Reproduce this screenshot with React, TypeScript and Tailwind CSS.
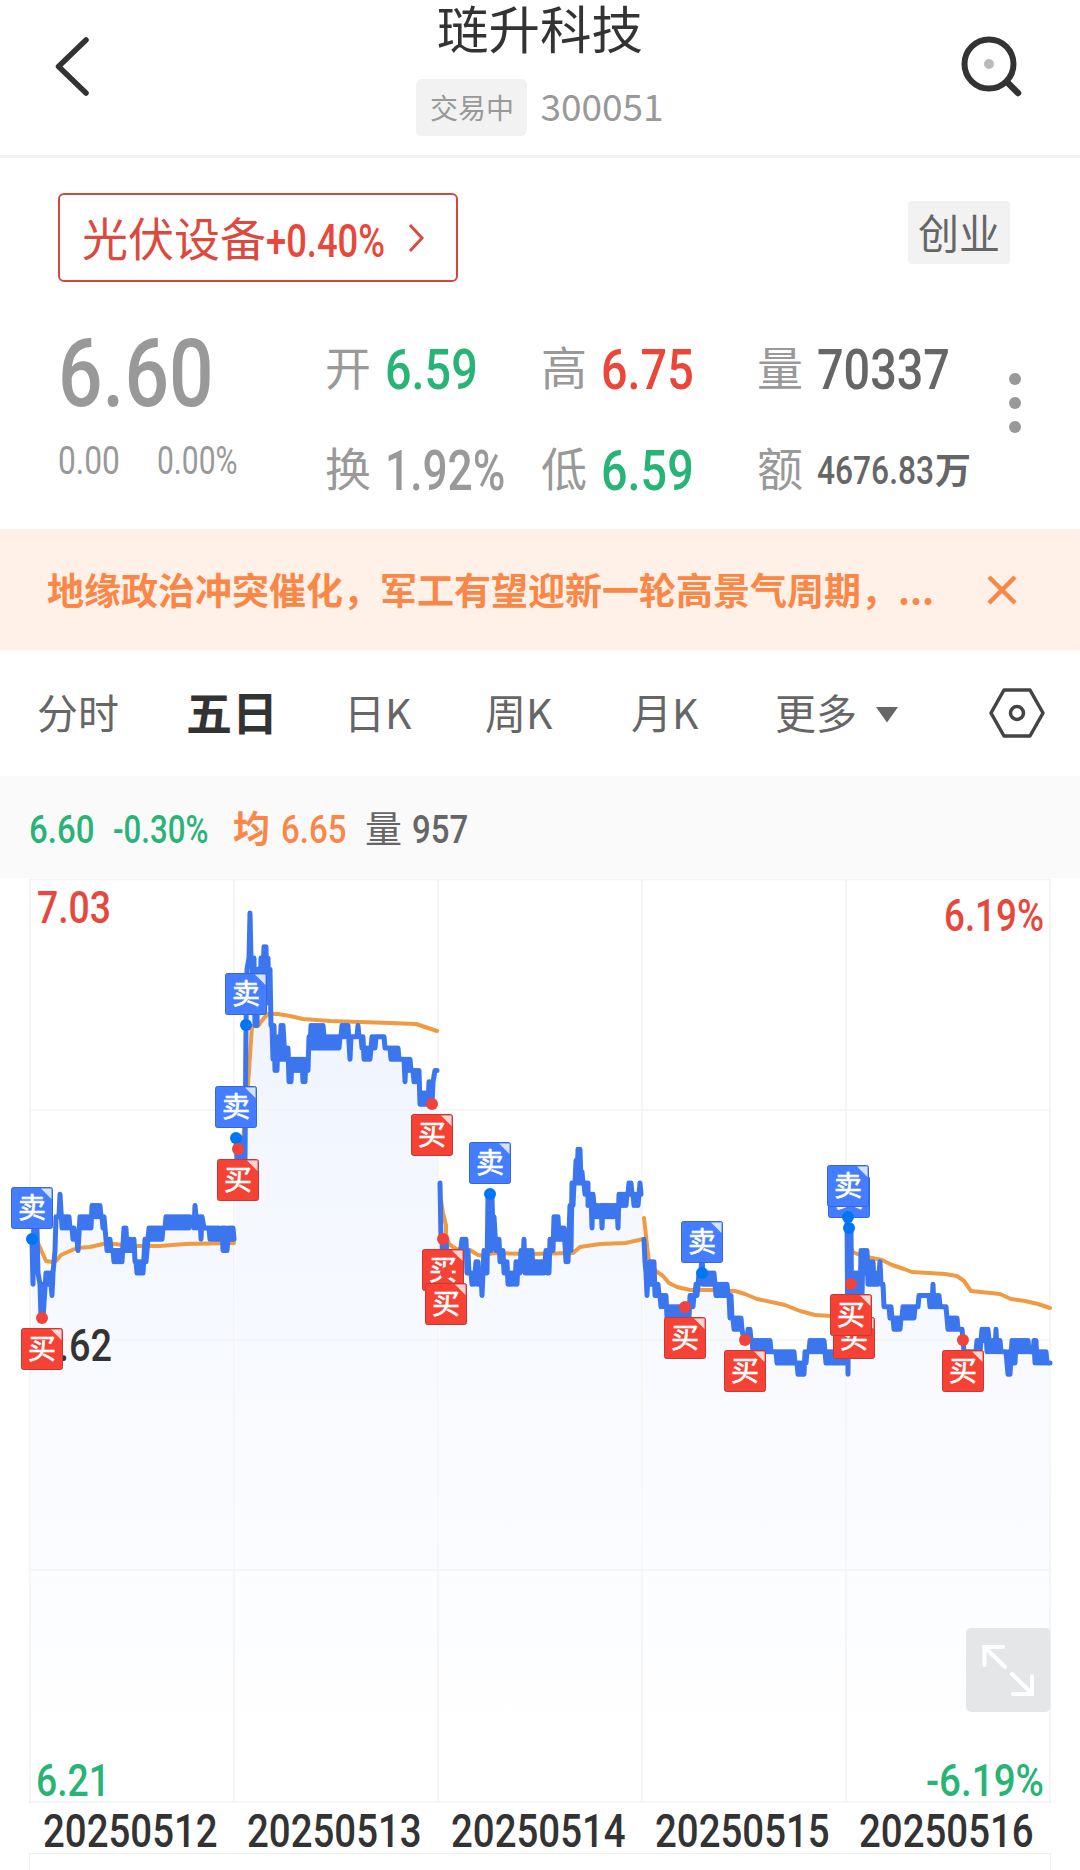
import { clsx } from "clsx"

// Chart geometry: one tick is 0.01 yuan, tick 0 is the previous close (6.62)
const BASE_Y = 1340.5
const TICK = 11.25
const CHART_TOP = 878

type Band = [number, number, number, number] // x from, x to, low tick, high tick
type Marker = { kind: "buy" | "sell"; x: number; y: number }

const days: Band[][] = [
    [
        [32, 33, 5, 9], [34, 35, 9, 12], [37, 38, 6, 10], [40, 43, 2, 5], [46, 50, 5, 6], [52, 53, 4, 6], [55, 56, 8, 11], [59, 60, 11, 13],
        [62, 70, 10, 11], [72, 75, 9, 10], [77, 78, 8, 9], [80, 91, 10, 11], [92, 101, 11, 12], [102, 105, 10, 11], [106, 111, 8, 9],
        [113, 122, 7, 8], [124, 127, 8, 10], [129, 132, 8, 9], [134, 135, 7, 9], [136, 143, 6, 7], [145, 146, 7, 9], [149, 163, 9, 10],
        [165, 190, 10, 11], [194, 195, 10, 12], [197, 199, 10, 11], [200, 202, 9, 11], [204, 209, 10, 10], [210, 220, 9, 10], [222, 227, 8, 10], [229, 234, 9, 10],
    ],
    [
        [236, 244, 16, 18], [245, 246, 16, 28], [246, 247, 28, 33], [249, 251, 34, 38], [252, 254, 30, 34], [255, 258, 28, 33],
        [260, 262, 30, 34], [264, 266, 31, 35], [267, 269, 30, 34], [270, 271, 28, 33], [272, 274, 25, 28], [275, 278, 24, 27], [280, 283, 25, 28],
        [285, 288, 25, 26], [289, 291, 23, 25], [292, 302, 24, 25], [303, 306, 23, 25], [308, 309, 24, 27], [310, 323, 26, 28], [325, 340, 26, 27],
        [341, 348, 27, 28], [350, 351, 25, 27], [352, 355, 27, 27], [357, 359, 27, 28], [361, 363, 26, 27], [364, 371, 25, 26], [371, 376, 26, 27],
        [377, 384, 27, 27], [385, 389, 26, 26], [390, 398, 25, 26], [399, 404, 25, 25], [405, 406, 23, 25], [407, 411, 24, 25], [413, 419, 23, 24],
        [420, 428, 21, 22], [429, 433, 21, 23], [435, 437, 24, 24],
    ],
    [
        [440, 441, 9, 14], [442, 446, 5, 9], [448, 458, 6, 7], [462, 466, 8, 9], [467, 469, 6, 8], [471, 474, 5, 6], [476, 479, 5, 7], [481, 482, 4, 6],
        [484, 487, 6, 8], [488, 492, 8, 13], [493, 494, 9, 11], [496, 499, 8, 9], [500, 503, 7, 8], [504, 507, 6, 7], [508, 513, 5, 6], [515, 518, 5, 7],
        [520, 521, 6, 8], [523, 524, 7, 9], [525, 533, 6, 8], [535, 544, 6, 7], [546, 549, 6, 8], [550, 553, 8, 9], [554, 559, 9, 11], [560, 564, 9, 10],
        [566, 568, 7, 9], [570, 571, 8, 12], [572, 574, 12, 14], [575, 577, 14, 16], [578, 580, 14, 17], [581, 583, 14, 15], [584, 588, 13, 14],
        [588, 591, 12, 13], [592, 593, 10, 13], [595, 599, 11, 12], [601, 602, 10, 12], [603, 616, 11, 12], [617, 618, 10, 12], [619, 627, 12, 13],
        [628, 632, 13, 14], [633, 638, 12, 13], [640, 641, 13, 14],
    ],
    [
        [644, 645, 7, 9], [646, 648, 4, 6], [649, 654, 5, 7], [655, 659, 4, 5], [660, 666, 3, 4], [667, 689, 2, 3], [690, 694, 3, 4], [695, 698, 4, 5],
        [698, 701, 5, 6], [701, 702, 6, 8], [703, 714, 5, 6], [716, 728, 4, 5], [729, 732, 2, 4], [733, 742, 1, 2], [744, 746, 0, 0], [747, 751, 0, 1],
        [752, 771, -1, 0], [772, 776, -1, -1], [777, 795, -2, -1], [797, 804, -3, -2], [805, 807, -2, -1], [809, 824, -1, 0], [826, 846, -2, -1],
    ],
    [
        [847, 848, -3, 11], [849, 852, -1, 10], [853, 860, 3, 6], [861, 863, 4, 8], [864, 867, 6, 8], [868, 873, 5, 7], [874, 878, 5, 6], [880, 881, 5, 7],
        [883, 884, 3, 5], [885, 888, 3, 3], [889, 892, 2, 3], [893, 901, 1, 2], [902, 914, 2, 3], [915, 918, 3, 3], [919, 928, 4, 4], [929, 931, 3, 4],
        [932, 933, 3, 5], [934, 940, 3, 4], [941, 946, 3, 3], [947, 957, 1, 2], [958, 962, 1, 1], [963, 964, -1, 0], [965, 976, -1, -1], [977, 980, -1, 0],
        [982, 985, 0, 1], [986, 988, -1, 1], [990, 993, -1, 0], [995, 996, -1, 1], [997, 1001, -1, 0], [1002, 1006, -1, -1], [1008, 1010, -3, -1],
        [1012, 1016, -2, 0], [1017, 1028, -1, 0], [1029, 1033, -1, -1], [1034, 1037, -2, 0], [1038, 1047, -2, -1], [1048, 1050, -2, -2],
    ],
]

const averages = [
    "33,1239 38,1243 42,1252 46,1261 52,1262 56,1261 61,1255 70,1251 77,1248 90,1247 103,1244 115,1244 130,1246 160,1246 185,1244 234,1243",
    "236,1150 243,1140 248,1085 252,1026 258,1026 264,1018 268,1014 278,1014 290,1016 303,1019 330,1021 360,1022 390,1023 416,1024 428,1028 437,1031",
    "441,1200 443,1213 446,1225 446,1235 449,1244 456,1249 470,1250 478,1255 485,1256 493,1253 530,1254 573,1253 580,1247 600,1244 626,1243 643,1239",
    "644,1218 647,1245 649,1262 656,1271 663,1276 669,1283 677,1287 690,1290 710,1290 735,1291 745,1294 757,1299 785,1305 800,1311 815,1315 832,1316 845,1318",
    "849,1245 853,1252 862,1256 882,1260 892,1265 904,1269 912,1272 945,1274 957,1276 964,1281 971,1291 1000,1294 1011,1299 1025,1301 1038,1304 1050,1308",
]

const markers: Marker[] = [
    { kind: "sell", x: 32, y: 1239 },
    { kind: "buy", x: 42, y: 1318 },
    { kind: "sell", x: 246, y: 1025 },
    { kind: "sell", x: 236, y: 1138 },
    { kind: "buy", x: 238, y: 1149 },
    { kind: "buy", x: 432, y: 1104 },
    { kind: "sell", x: 490, y: 1194 },
    { kind: "buy", x: 443, y: 1239 },
    { kind: "buy", x: 446, y: 1273 },
    { kind: "sell", x: 702, y: 1273 },
    { kind: "buy", x: 685, y: 1307 },
    { kind: "buy", x: 745, y: 1340 },
    { kind: "sell", x: 849, y: 1228 },
    { kind: "sell", x: 848, y: 1217 },
    { kind: "buy", x: 854, y: 1307 },
    { kind: "buy", x: 851, y: 1284 },
    { kind: "buy", x: 963, y: 1340 },
]

const dates = ["20250512", "20250513", "20250514", "20250515", "20250516"]

const tickY = (n: number) => BASE_Y - n * TICK

// Walks through every band, bouncing between its low and high price
const toPoints = (bands: Band[]) => {
    const pts: string[] = []
    let up = true
    bands.forEach(([from, to, lo, hi]) => {
        for (let x = from; x <= to; x += 1) {
            pts.push(`${x},${tickY(up ? hi : lo)}`)
            up = !up
        }
    })
    return pts.join(" ")
}

// Condensed digits; a trailing percent sign needs a slightly tighter squeeze
const Num = ({ children, className }: { children: string; className?: string }) => (
    <span
        className={clsx(
            "block origin-left whitespace-nowrap font-['Roboto',sans-serif] leading-none",
            children.endsWith("%") ? "scale-x-[0.79]" : "scale-x-[0.835]",
            className
        )}
    >
        {children}
    </span>
)

const AxisText = ({ x, y, w, fill, children }: { x: number; y: number; w: number; fill: string; children: string }) => (
    <text x={x} y={y} textLength={w} lengthAdjust="spacingAndGlyphs" fill={fill} fontSize="45" className="font-['Roboto',sans-serif] font-medium">
        {children}
    </text>
)

const TradeMarker = ({ kind, x, y }: Marker) => {
    const sell = kind === "sell"
    const top = sell ? y - 52 : y + 10
    const left = x - 21
    return (
        <g>
            <rect x={left + 0.5} y={top + 0.5} width="41" height="41" rx="2" fill={sell ? "#447dff" : "#f64235"} stroke={sell ? "#3867d6" : "#c63a33"} />
            <path d={`M${left + 30} ${top + 1.5}h10.5v10.5z`} fill="#fff" fillOpacity="0.78" />
            <text x={x} y={top + 31} textAnchor="middle" fontSize="28" fill="#fff" stroke="#fff" strokeWidth="0.6" className="font-['Noto_Sans_CJK_SC',sans-serif]">
                {sell ? "卖" : "买"}
            </text>
        </g>
    )
}

const Header = () => (
    <header className="flex h-[158px] items-start justify-between border-b-[3px] border-[#f2f2f2]">
        <svg className="ml-[50px] mt-[33px] h-[66px] w-[46px]" viewBox="0 0 46 66" fill="none" stroke="#333" strokeWidth="5.5" strokeLinecap="round" strokeLinejoin="round">
            <path d="M36 7 8.500 33.500 36 60" />
        </svg>
        <div className="ml-[26px] flex flex-col items-center">
            <h1 className="text-[51.500px] leading-[54px] text-[#333]">琏升科技</h1>
            <div className="mt-[25px] flex items-center gap-[13px]">
                <span className="flex h-[57px] w-[111px] items-center justify-center rounded-md bg-[#f2f2f2] pb-px text-[28px] leading-none text-[#999]">交易中</span>
                <span className="pb-[5px] text-[37px] leading-none text-[#999]">300051</span>
            </div>
        </div>
        <svg className="mr-[52px] mt-[32px] size-[70px]" viewBox="0 0 70 70" fill="none" stroke="#333">
            <circle cx="31" cy="32" r="24.500" strokeWidth="6" />
            <circle cx="31" cy="32" r="5" fill="#bbb" stroke="none" />
            <path d="m49 50 11 11" strokeWidth="6.500" strokeLinecap="round" />
        </svg>
    </header>
)

const Pair = ({ label, value, color }: { label: string; value: string; color: string }) => (
    <div className="flex h-[46px] items-center gap-[14px]">
        <span className="pb-1 text-[46px] leading-none text-[#999]">{label}</span>
        <Num className={clsx("w-0 pt-[6px] text-[56px] font-medium", color)}>{value}</Num>
    </div>
)

const Quote = () => (
    <section className="flex h-[371px] flex-col">
        <div className="flex items-start justify-between pl-[58px] pr-[70px] pt-[35px]">
            <div className="flex h-[89px] w-[400px] items-center rounded-md border-2 border-[#d2483f] pl-[22px] text-[#dc4a3f]">
                <span className="pb-1 text-[46px] leading-none">光伏设备</span>
                <Num className="w-[141px] pt-[6px] text-[46px] font-medium text-[#e8483c]">+0.40%</Num>
                <svg className="h-[30px] w-5" viewBox="0 0 20 30" fill="none" stroke="currentColor" strokeWidth="3">
                    <path d="M3 2 15 15 3 28" />
                </svg>
            </div>
            <span className="mt-2 flex h-[63px] w-[102px] items-center justify-center rounded bg-[#f2f2f2] pb-[2px] text-[41px] leading-none text-[#666]">创业</span>
        </div>
        <div className="mt-[45px] flex">
            <div className="w-[325px] pl-[58px]">
                <Num className="text-[94px] font-medium text-[#999]">6.60</Num>
                <div className="mt-[21px] flex text-[#999]">
                    <Num className="w-[99px] text-[38px]">0.00</Num>
                    <Num className="w-[90px] text-[38px]">0.00%</Num>
                </div>
            </div>
            <div className="grid w-[665px] grid-cols-[216px_216px_233px] content-start gap-y-[55px] pt-[17px]">
                <Pair label="开" value="6.59" color="text-[#29b477]" />
                <Pair label="高" value="6.75" color="text-[#ea463a]" />
                <Pair label="量" value="70337" color="text-[#666]" />
                <Pair label="换" value="1.92%" color="text-[#999]" />
                <Pair label="低" value="6.59" color="text-[#29b477]" />
                <div className="flex h-[46px] items-center">
                    <span className="pb-1 text-[46px] leading-none text-[#999]">额</span>
                    <Num className="ml-[14px] w-[118px] pt-[5px] text-[38px] font-medium text-[#666]">4676.83</Num>
                    <span className="text-[36px] font-bold leading-none text-[#666]">万</span>
                </div>
            </div>
            <div className="flex flex-col gap-3 pl-[19px] pt-[46px]">
                {[0, 1, 2].map((i) => (
                    <i key={i} className="block size-3 rounded-full bg-[#999]" />
                ))}
            </div>
        </div>
    </section>
)

const Notice = () => (
    <section className="flex h-[121px] items-center bg-[#fff0e8] text-[#f98747]">
        <p className="w-[987px] whitespace-nowrap pb-px pl-[47px] text-[37px] font-bold leading-none">地缘政治冲突催化，军工有望迎新一轮高景气周期，...</p>
        <svg className="size-[30px]" viewBox="0 0 30 30" fill="none" stroke="currentColor" strokeWidth="4.5">
            <path d="m2 2 26 26M28 2 2 28" />
        </svg>
    </section>
)

const Tabs = () => (
    <nav className="flex h-[126px] items-center pl-[37px] text-[41px] leading-[44px] text-[#666]">
        <span className="w-[149px] pb-[4px]">分时</span>
        <span className="w-[158px] pb-[7px] text-[46px] font-bold text-[#333]">五日</span>
        <span className="w-[141px] pb-[4px]">日K</span>
        <span className="w-[146px] pb-[4px]">周K</span>
        <span className="w-[144px] pb-[4px]">月K</span>
        <span className="w-[100px] pb-[4px]">更多</span>
        <svg className="mt-[3px] h-4 w-[24px]" viewBox="0 0 24 16" fill="#666">
            <path d="M1 0h22L12 15.500z" />
        </svg>
        <svg className="ml-[90px] h-[54px] w-[56px]" viewBox="0 0 56 54" fill="none" stroke="#444" strokeWidth="3.5" strokeLinejoin="round">
            <path d="M15 4h26l13 23-13 23H15L2 27z" />
            <circle cx="28" cy="27" r="6.500" />
        </svg>
    </nav>
)

const InfoBar = () => (
    <div className="flex h-[102px] items-center bg-[#fafafa] pl-[29px] text-[37px] leading-none">
        <Num className="w-[84px] pt-[6px] text-[39.500px] font-medium text-[#29b477]">6.60</Num>
        <Num className="w-[120px] pt-[6px] text-[39.500px] font-medium text-[#29b477]">-0.30%</Num>
        <span className="w-[48px] font-bold text-[#f98747]">均</span>
        <Num className="w-[84px] pt-[6px] text-[39.500px] font-medium text-[#f98747]">6.65</Num>
        <span className="w-[47px] text-[#666]">量</span>
        <Num className="pt-[6px] text-[39.500px] font-medium text-[#666]">957</Num>
    </div>
)

const Chart = () => (
    <svg className="block h-[927px] w-[1080px]" viewBox={`0 ${CHART_TOP} 1080 927`}>
        <defs>
            <linearGradient id="area" gradientUnits="userSpaceOnUse" x1="0" y1="913" x2="0" y2="1802">
                <stop offset="0" stopColor="#447dff" stopOpacity="0.09" />
                <stop offset="0.9" stopColor="#447dff" stopOpacity="0.004" />
                <stop offset="1" stopColor="#447dff" stopOpacity="0" />
            </linearGradient>
        </defs>
        {days.map((bands, i) => (
            <polygon key={i} fill="url(#area)" points={`${30 + i * 204},1802 ${toPoints(bands)} ${234 + i * 204},1802`} />
        ))}
        <g stroke="#f3f3f3" strokeWidth="1.5">
            {[879.5, 1110, 1340, 1570, 1802].map((y) => (
                <path key={y} d={`M29 ${y}H1051`} />
            ))}
            {[30, 234, 438, 642, 846, 1050].map((x) => (
                <path key={x} d={`M${x} 879V1803`} />
            ))}
        </g>
        <AxisText x={37} y={923} w={74} fill="#e5483d">7.03</AxisText>
        <AxisText x={944} y={931} w={100} fill="#e5483d">6.19%</AxisText>
        <AxisText x={37} y={1361} w={75} fill="#333">6.62</AxisText>
        <AxisText x={36} y={1796} w={74} fill="#29b477">6.21</AxisText>
        <AxisText x={926} y={1796} w={118} fill="#29b477">-6.19%</AxisText>
        <g fill="none" strokeLinecap="round" strokeLinejoin="round">
            {averages.map((points) => (
                <polyline key={points} points={points} stroke="#f09a42" strokeWidth="4" />
            ))}
            {days.map((bands, i) => (
                <polyline key={i} points={toPoints(bands)} stroke="#3b76ee" strokeWidth="5" />
            ))}
        </g>
        {markers.map((m) => (
            <TradeMarker key={`${m.x}-${m.y}`} {...m} />
        ))}
        {markers.filter((m) => m.x !== 854).map((m) => (
            <circle key={`${m.x}-${m.y}`} cx={m.x} cy={m.y} r="6" fill={m.kind === "sell" ? "#0076f6" : "#f2433a"} />
        ))}
        <rect x="966" y="1628" width="84.500" height="84" rx="5" fill="#e5e6e8" />
        <path d="M1003 1647H984.500V1665M985 1647.500 1005 1667M1012 1674 1032 1693.500M1032 1676V1694H1013" fill="none" stroke="#fff" strokeWidth="4" strokeLinecap="round" />
    </svg>
)

export default function App() {
    return (
        <main className="flex h-[1870px] w-[1080px] flex-col overflow-hidden bg-white font-['Noto_Sans_CJK_SC',sans-serif]">
            <Header />
            <Quote />
            <Notice />
            <Tabs />
            <InfoBar />
            <Chart />
            <div className="grid h-[48px] grid-cols-[repeat(5,204px)] items-center pl-[43px]">
                {dates.map((d) => (
                    <Num key={d} className="w-0 pt-[3px] text-[46px] font-medium text-[#333]">{d}</Num>
                ))}
            </div>
            <div className="mx-[29px] h-[17px] border-x border-t border-[#f2f2f2]" />
        </main>
    )
}
